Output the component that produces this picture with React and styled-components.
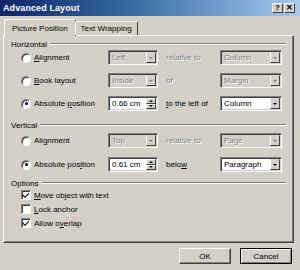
import styled, { createGlobalStyle } from "styled-components"

const GlobalStyle = createGlobalStyle`
    html, body {
        margin: 0;
        padding: 0;
        background: #d4d0c8;
    }
    body {
        font-family: "Liberation Sans", Arial, sans-serif;
        font-size: 8px;
        color: #000;
    }
`

const Window = styled.div`
    width: 300px;
    height: 270px;
    box-sizing: border-box;
    background: #d4d0c8;
    display: flex;
    flex-direction: column;
    overflow: hidden;
`
const TitleBar = styled.div`
    height: 16px;
    flex: none;
    display: flex;
    align-items: center;
    justify-content: space-between;
    padding: 0 5px 0 3px;
    background: linear-gradient(to right, #0a246a 0%, #3a6ea5 45%, #a6caf0 100%);
`
const TitleText = styled.span`
    color: #fff;
    font-weight: bold;
    font-size: 9px;
    letter-spacing: 0.1px;
`
const TitleButtons = styled.div`
    display: flex;
    gap: 1px;
`
const TitleButton = styled.div`
    width: 11px;
    height: 10px;
    box-sizing: border-box;
    background: #d4d0c8;
    border: 1px solid;
    border-color: #fff #404040 #404040 #fff;
    display: flex;
    align-items: center;
    justify-content: center;
    font-size: 8px;
    font-weight: bold;
    line-height: 1;
`
const Body = styled.div`
    flex: 1;
    display: flex;
    flex-direction: column;
    padding: 3px 6px 0 3px;
`
const TabStrip = styled.div`
    display: flex;
    align-items: flex-end;
    height: 16px;
    padding-left: 1px;
    position: relative;
    z-index: 1;
`
const Tab = styled.div`
    box-sizing: border-box;
    height: ${props => props.active ? "17px" : "14px"};
    padding: 0 ${props => props.active ? "7px" : "5px"};
    margin-bottom: ${props => props.active ? "-1px" : "0"};
    margin-left: ${props => props.active ? "0" : "-1px"};
    background: #d4d0c8;
    border: 1px solid;
    border-bottom: none;
    border-color: #fff #404040 #d4d0c8 #fff;
    border-radius: 2px 2px 0 0;
    display: flex;
    align-items: center;
    font-size: 8px;
    white-space: nowrap;
`
const Panel = styled.div`
    height: 208px;
    box-sizing: border-box;
    border: 1px solid;
    border-color: #fff #404040 #404040 #fff;
    box-shadow: inset -1px -1px 0 #808080;
    padding: 3px 7px 0 7px;
    display: flex;
    flex-direction: column;
`
const GroupHeader = styled.div`
    display: flex;
    align-items: center;
    height: 10px;
    margin-top: ${props => props.top}px;
    margin-bottom: ${props => props.bottom}px;
    &::after {
        content: "";
        flex: 1;
        margin-left: 3px;
        border-top: 1px solid #808080;
        border-bottom: 1px solid #fff;
    }
`
const Rows = styled.div`
    display: flex;
    flex-direction: column;
    gap: ${props => props.gap}px;
    padding-left: 10px;
`
const Row = styled.div`
    display: grid;
    grid-template-columns: 87px 50px 62px 62px;
    height: 15px;
    align-items: center;
`
const Choice = styled.label`
    display: flex;
    align-items: center;
    gap: 3px;
    white-space: nowrap;
`
const Radio = styled.span`
    width: 10px;
    height: 10px;
    box-sizing: border-box;
    border-radius: 50%;
    background: #fff;
    border: 1px solid;
    border-color: #808080 #fff #fff #808080;
    box-shadow: inset 1px 1px 0 #404040;
    display: flex;
    align-items: center;
    justify-content: center;
    &::after {
        content: "";
        width: 3px;
        height: 3px;
        border-radius: 50%;
        background: ${props => props.checked ? "#000" : "transparent"};
    }
`
const Field = styled.div`
    height: 15px;
    box-sizing: border-box;
    display: flex;
    align-items: stretch;
    background: ${props => props.disabled ? "#d4d0c8" : "#fff"};
    border: 1px solid;
    border-color: #808080 #fff #fff #808080;
    box-shadow: inset 1px 1px 0 #404040, inset -1px -1px 0 #d4d0c8;
    padding: 1px;
`
const FieldText = styled.span`
    flex: 1;
    display: flex;
    align-items: center;
    padding-left: 2px;
    color: ${props => props.disabled ? "#808080" : "#000"};
    text-shadow: ${props => props.disabled ? "1px 1px 0 #fff" : "none"};
    white-space: nowrap;
    overflow: hidden;
`
const ArrowButton = styled.span`
    width: 10px;
    box-sizing: border-box;
    background: #d4d0c8;
    border: 1px solid;
    border-color: #d4d0c8 #404040 #404040 #fff;
    display: flex;
    align-items: center;
    justify-content: center;
    &::after {
        content: "";
        border-left: 2px solid transparent;
        border-right: 2px solid transparent;
        border-top: 2px solid ${props => props.disabled ? "#808080" : "#000"};
    }
`
const Spinner = styled.span`
    width: 10px;
    display: flex;
    flex-direction: column;
`
const SpinHalf = styled.span`
    flex: 1;
    box-sizing: border-box;
    background: #d4d0c8;
    border: 1px solid;
    border-color: #fff #404040 #404040 #fff;
    display: flex;
    align-items: center;
    justify-content: center;
    &::after {
        content: "";
        border-left: 2px solid transparent;
        border-right: 2px solid transparent;
        ${props => props.up ? "border-bottom: 2px solid #000;" : "border-top: 2px solid #000;"}
    }
`
const Caption = styled.span`
    padding-left: 8px;
    white-space: nowrap;
    color: ${props => props.disabled ? "#808080" : "#000"};
    text-shadow: ${props => props.disabled ? "1px 1px 0 #fff" : "none"};
`
const CheckRow = styled.label`
    display: flex;
    align-items: center;
    gap: 3px;
    height: 14px;
`
const CheckBox = styled.span`
    width: 10px;
    height: 10px;
    box-sizing: border-box;
    background: #fff;
    border: 1px solid;
    border-color: #808080 #fff #fff #808080;
    box-shadow: inset 1px 1px 0 #404040;
    display: flex;
    align-items: center;
    justify-content: center;
`
const Footer = styled.div`
    display: flex;
    justify-content: flex-end;
    gap: 9px;
    padding: 5px 2px 0 0;
`
const Button = styled.div`
    width: ${props => props.w}px;
    height: 16px;
    box-sizing: border-box;
    background: #d4d0c8;
    border: 1px solid;
    border-color: ${props => props.default ? "#000" : "#fff #404040 #404040 #fff"};
    box-shadow: ${props => props.default
        ? "inset 1px 1px 0 #fff, inset -1px -1px 0 #808080"
        : "inset -1px -1px 0 #808080"};
    display: flex;
    align-items: center;
    justify-content: center;
`
const U = styled.span`
    text-decoration: underline;
`

const Select = ({ value, disabled }) => (
    <Field disabled={disabled}>
        <FieldText disabled={disabled}>{value}</FieldText>
        <ArrowButton disabled={disabled} />
    </Field>
)

const SpinField = ({ value }) => (
    <Field>
        <FieldText>{value}</FieldText>
        <Spinner>
            <SpinHalf up />
            <SpinHalf />
        </Spinner>
    </Field>
)

const Check = () => (
    <svg width="8" height="8" viewBox="0 0 8 8">
        <path d="M1 3.5 L3 5.5 L7 1.5 L7 3 L3 7 L1 5 Z" fill="#000" />
    </svg>
)

const App = () => {
    return (
        <Window>
            <GlobalStyle />
            <TitleBar>
                <TitleText>Advanced Layout</TitleText>
                <TitleButtons>
                    <TitleButton>?</TitleButton>
                    <TitleButton>✕</TitleButton>
                </TitleButtons>
            </TitleBar>
            <Body>
                <TabStrip>
                    <Tab active>Picture Position</Tab>
                    <Tab>Text Wrapping</Tab>
                </TabStrip>
                <Panel>
                    <GroupHeader top={0} bottom={1}>Horizontal</GroupHeader>
                    <Rows gap={8}>
                        <Row>
                            <Choice><Radio /><span><U>A</U>lignment</span></Choice>
                            <Select value="Left" disabled />
                            <Caption disabled>relative to</Caption>
                            <Select value="Column" disabled />
                        </Row>
                        <Row>
                            <Choice><Radio /><span><U>B</U>ook layout</span></Choice>
                            <Select value="Inside" disabled />
                            <Caption disabled>of</Caption>
                            <Select value="Margin" disabled />
                        </Row>
                        <Row>
                            <Choice><Radio checked /><span>Absolute <U>p</U>osition</span></Choice>
                            <SpinField value="0.66 cm" />
                            <Caption><U>t</U>o the left of</Caption>
                            <Select value="Column" />
                        </Row>
                    </Rows>
                    <GroupHeader top={9} bottom={3}>Vertical</GroupHeader>
                    <Rows gap={9}>
                        <Row>
                            <Choice><Radio /><span>Ali<U>g</U>nment</span></Choice>
                            <Select value="Top" disabled />
                            <Caption disabled>relative to</Caption>
                            <Select value="Page" disabled />
                        </Row>
                        <Row>
                            <Choice><Radio checked /><span>Absolute pos<U>i</U>tion</span></Choice>
                            <SpinField value="0.61 cm" />
                            <Caption>belo<U>w</U></Caption>
                            <Select value="Paragraph" />
                        </Row>
                    </Rows>
                    <GroupHeader top={6} bottom={0}>Options</GroupHeader>
                    <Rows gap={0}>
                        <CheckRow><CheckBox><Check /></CheckBox><span><U>M</U>ove object with text</span></CheckRow>
                        <CheckRow><CheckBox /><span><U>L</U>ock anchor</span></CheckRow>
                        <CheckRow><CheckBox><Check /></CheckBox><span>Allow o<U>v</U>erlap</span></CheckRow>
                    </Rows>
                </Panel>
                <Footer>
                    <Button w={52}>OK</Button>
                    <Button w={52} default>Cancel</Button>
                </Footer>
            </Body>
        </Window>
    )
}

export default App
